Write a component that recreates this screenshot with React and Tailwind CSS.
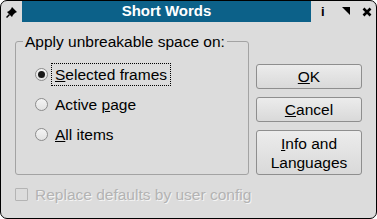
import React, { useState } from 'react';

const font = { fontFamily: '"Liberation Sans", Arial, sans-serif' };

const PinIcon = () => (
  <svg width="12" height="12" viewBox="0 0 12 12">
    <path d="M6 1 L11 6 L9 7 L7 9 L6 11 L1 6 L3 5 L5 3 Z" fill="#000" />
    <path d="M3.5 8.5 L0.5 11.5" stroke="#000" strokeWidth="1.5" />
  </svg>
);

const Radio = ({ checked }) => (
  <span className="w-[13px] h-[13px] rounded-full border border-[#8c8c8c] bg-gradient-to-b from-[#f4f4f4] to-[#e2e2e2] flex items-center justify-center shrink-0">
    {checked && <span className="w-[7px] h-[7px] rounded-full bg-[#1a1a1a]" />}
  </span>
);

const Button = ({ children, className = '' }) => (
  <button
    className={`w-[106px] border border-[#8e8e8e] rounded-[3px] bg-gradient-to-b from-[#ececec] to-[#d9d9d9] text-[15.5px] leading-[19px] text-black flex flex-col items-center justify-center ${className}`}
  >
    {children}
  </button>
);

export default function App() {
  const [choice, setChoice] = useState('selected');

  const options = [
    { id: 'selected', label: <><span className="underline">S</span>elected frames</> },
    { id: 'page', label: <>Active <span className="underline">p</span>age</> },
    { id: 'all', label: <><span className="underline">A</span>ll items</> },
  ];

  return (
    <div style={font} className="w-[377px] h-[219px] bg-[#dcdcdc] border border-black rounded-[7px] overflow-hidden flex flex-col">
      {/* title bar */}
      <div className="h-[21px] flex items-stretch">
        <div className="w-[21px] flex items-center justify-center">
          <PinIcon />
        </div>
        <div className="w-[289px] bg-[#0c6189] flex items-center justify-center text-white font-bold text-[15px]">
          Short Words
        </div>
        <div className="flex-1 flex items-center pl-[10px] text-black">
          <span className="font-bold text-[13px] leading-none w-[4px]">i</span>
          <svg className="ml-[16px]" width="9" height="9" viewBox="0 0 9 9"><path d="M1 0 H9 V8 Z" fill="#000" /></svg>
          <svg className="ml-[12px]" width="10" height="10" viewBox="0 0 10 10">
            <path d="M1.5 1.5 L8.5 8.5 M8.5 1.5 L1.5 8.5" stroke="#000" strokeWidth="2.6" />
          </svg>
        </div>
      </div>

      <div className="flex pl-[14px] pt-[11px]">
        <fieldset className="w-[234px] h-[142px] border border-[#a3a3a3] rounded-[3px] p-0 m-0">
          <legend className="ml-[7px] px-[2px] text-[15.5px] leading-[17px] text-black whitespace-nowrap">
            Apply unbreakable space on:
          </legend>
          <div className="mt-[9px] pl-[19px] flex flex-col">
            {options.map((o) => (
              <label
                key={o.id}
                onClick={() => setChoice(o.id)}
                className="h-[30px] flex items-center gap-[3px] text-[15.5px] text-black cursor-default"
              >
                <Radio checked={choice === o.id} />
                <span
                  className={`px-[3px] leading-[21px] border border-dotted ${
                    o.id === 'selected' ? 'border-black' : 'border-transparent'
                  }`}
                >
                  {o.label}
                </span>
              </label>
            ))}
          </div>
        </fieldset>

        <div className="ml-[7px] mt-[31px] flex flex-col gap-[8px]">
          <Button className="h-[25px]">
            <span><span className="underline">O</span>K</span>
          </Button>
          <Button className="h-[25px]">
            <span><span className="underline">C</span>ancel</span>
          </Button>
          <Button className="h-[45px]">
            <span><span className="underline">I</span>nfo and</span>
            <span>Languages</span>
          </Button>
        </div>
      </div>

      <div className="flex items-center pl-[14px] mt-[8px] gap-[7px]">
        <span className="w-[13px] h-[13px] border border-[#b4b4b4] rounded-[1px]" />
        <span className="text-[15.5px] text-[#b3b3b3] [text-shadow:1px_1px_0_#f4f4f4]">
          Replace defaults by user config
        </span>
      </div>
    </div>
  );
}
